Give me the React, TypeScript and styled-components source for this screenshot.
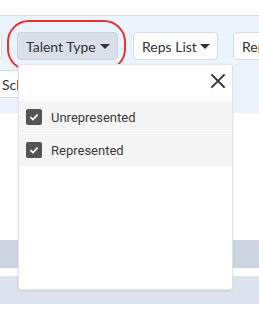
import React from 'react';
import styled, { createGlobalStyle } from 'styled-components';

const GlobalStyle = createGlobalStyle`
  html, body {
    margin: 0;
    padding: 0;
    background: #fff;
    font-family: Lato, 'Noto Sans', sans-serif;
  }
`;

const Page = styled.div`
  position: relative;
  width: 259px;
  height: 315px;
  overflow: hidden;
  background: #fff;
`;

const TopSpace = styled.div`
  height: 15px;
`;

const FilterArea = styled.div`
  height: 98px;
  background: #ebf4fc;
  border-top: 1px solid #d9dee4;
  padding-top: 16px;
  box-sizing: border-box;
  overflow: hidden;
`;

const FilterRow = styled.div<{ $offset: number; $top?: number }>`
  display: flex;
  gap: 15px;
  margin-left: ${(p) => p.$offset}px;
  margin-top: ${(p) => p.$top || 0}px;
`;

const FilterButton = styled.div<{ $active?: boolean; $width: number }>`
  flex: none;
  display: flex;
  align-items: center;
  justify-content: space-between;
  width: ${(p) => p.$width}px;
  height: 28px;
  box-sizing: border-box;
  padding: 0 7px 0 8px;
  border: 1px solid ${(p) => (p.$active ? '#cbd3de' : '#d6dce3')};
  border-radius: 4px;
  background: ${(p) => (p.$active ? '#d9e0ea' : '#fff')};
  color: #333;
  font-size: 14px;
  white-space: nowrap;
  overflow: hidden;
`;

const Caret = styled.span`
  flex: none;
  width: 0;
  height: 0;
  border-left: 5px solid transparent;
  border-right: 5px solid transparent;
  border-top: 5px solid #333;
`;

const Gap = styled.div<{ $h: number }>`
  height: ${(p) => p.$h}px;
`;

const Band = styled.div<{ $color: string }>`
  height: 28px;
  background: ${(p) => p.$color};
`;

const Highlight = styled.div`
  position: absolute;
  left: 7px;
  top: 20px;
  width: 119px;
  height: 51px;
  box-sizing: border-box;
  border: 2px solid #e8322f;
  border-radius: 22px;
`;

const Panel = styled.div`
  position: absolute;
  left: 18px;
  top: 64px;
  width: 215px;
  height: 226px;
  box-sizing: border-box;
  background: #fff;
  border: 1px solid #e4e4e4;
  border-radius: 3px;
  box-shadow: 0 1px 3px rgba(0, 0, 0, 0.08);
`;

const PanelHeader = styled.div`
  display: flex;
  justify-content: flex-end;
  height: 36px;
  padding: 8px 6px 0 0;
  box-sizing: border-box;
`;

const Option = styled.label`
  display: flex;
  align-items: center;
  gap: 9px;
  height: 32px;
  padding-left: 7px;
  background: #f5f5f5;
  font-family: Roboto, sans-serif;
  font-size: 13px;
  color: #3a3a3a;
  margin-bottom: 1px;
`;

const Check = styled.span`
  display: flex;
  align-items: center;
  justify-content: center;
  width: 16px;
  height: 16px;
  border-radius: 2px;
  background: #555;
`;

const CloseIcon = () => (
  <svg width="16" height="16" viewBox="0 0 16 16">
    <path d="M2 2 L14 14 M14 2 L2 14" stroke="#333" strokeWidth="1.8" strokeLinecap="square" />
  </svg>
);

const CheckMark = () => (
  <svg width="10" height="10" viewBox="0 0 10 10">
    <path d="M1.5 5.2 L4 7.6 L8.6 2.6" stroke="#fff" strokeWidth="1.7" fill="none" />
  </svg>
);

const options = ['Unrepresented', 'Represented'];

export default function App() {
  return (
    <Page>
      <GlobalStyle />
      <TopSpace />
      <FilterArea>
        <FilterRow $offset={-62}>
          <FilterButton $width={64}>Birthday</FilterButton>
          <FilterButton $active $width={101}>
            Talent Type <Caret />
          </FilterButton>
          <FilterButton $width={85}>
            Reps List <Caret />
          </FilterButton>
          <FilterButton $width={110}>
            Rep Status <Caret />
          </FilterButton>
        </FilterRow>
        <FilterRow $offset={-7} $top={10}>
          <FilterButton $width={110}>
            Schools <Caret />
          </FilterButton>
        </FilterRow>
      </FilterArea>
      <Gap $h={127} />
      <Band $color="#cdd5e1" />
      <Gap $h={8} />
      <Band $color="#dce3ee" />
      <Highlight />
      <Panel>
        <PanelHeader>
          <CloseIcon />
        </PanelHeader>
        {options.map((o) => (
          <Option key={o}>
            <Check>
              <CheckMark />
            </Check>
            {o}
          </Option>
        ))}
      </Panel>
    </Page>
  );
}
